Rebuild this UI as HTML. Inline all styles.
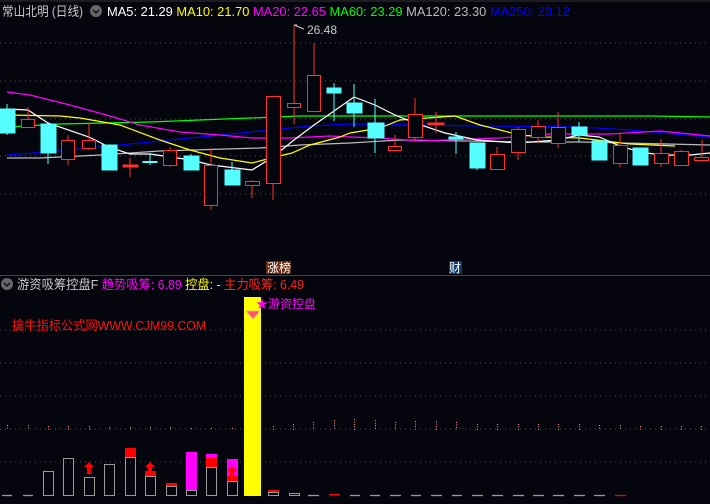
<!DOCTYPE html><html><head><meta charset="utf-8"><style>
body{margin:0;background:#05050d;width:710px;height:499px;overflow:hidden;font-family:"Liberation Sans","Noto Sans CJK SC",sans-serif}
svg text{font-family:"Liberation Sans","Noto Sans CJK SC",sans-serif}
</style></head><body>
<svg width="710" height="499" xmlns="http://www.w3.org/2000/svg">
<rect width="710" height="499" fill="#05050d"/>
<line x1="0" y1="1" x2="710" y2="1" fill="none" stroke="#333" />
<g stroke="#555" stroke-dasharray="1,4">
<line x1="0" y1="43" x2="710" y2="43"/><line x1="0" y1="81" x2="710" y2="81"/><line x1="0" y1="119" x2="710" y2="119"/><line x1="0" y1="156" x2="710" y2="156"/><line x1="0" y1="194" x2="710" y2="194"/>
<line x1="0" y1="330" x2="710" y2="330"/><line x1="0" y1="363" x2="710" y2="363"/><line x1="0" y1="396" x2="710" y2="396"/><line x1="0" y1="429" x2="710" y2="429"/><line x1="0" y1="462" x2="710" y2="462"/>
</g>
<text x="2" y="16" font-size="13" fill="#c8c8c8" textLength="81" lengthAdjust="spacingAndGlyphs">常山北明 (日线)</text>
<circle cx="96" cy="11" r="6" fill="#666"/><path d="M93 10l3 3 3-3" stroke="#111" stroke-width="1.5" fill="none"/>
<text x="107" y="16" font-size="13" textLength="463" lengthAdjust="spacingAndGlyphs"><tspan fill="#fff">MA5: 21.29 </tspan><tspan fill="#ffff00">MA10: 21.70 </tspan><tspan fill="#ff00ff">MA20: 22.65 </tspan><tspan fill="#00ff00">MA60: 23.29 </tspan><tspan fill="#bbb">MA120: 23.30 </tspan><tspan fill="#0000ff">MA250: 23.12</tspan></text>
<text x="307" y="34" font-size="12" fill="#ccc">26.48</text>
<path d="M294 25l3 0M294 25l10 4" stroke="#ccc" fill="none"/>
<g fill="none" stroke-width="1.2">
<polyline stroke="#00ff00" points="7,127 60,124 150,122 250,118 300,116 350,116 500,116 650,116 710,117"/>
<polyline stroke="#0000ff" points="7,155 60,151 150,142 220,135 270,130 310,126 350,124 420,125 480,126 580,127 630,130 710,137"/>
<polyline stroke="#bbbbbb" points="7,158 40,158 100,155 160,151 260,148 300,145 350,143 400,140 530,142 580,142 710,145"/>
<polyline stroke="#ff00ff" points="7,92 30,95 70,105 110,116 140,125 180,132 220,135 252,138 290,138 330,136 350,137 380,138 420,141 500,138 550,134 610,134 660,131 710,136"/>
<polyline stroke="#ffff00" points="7,115 60,116 80,118 120,125 160,140 190,150 220,158 252,163 275,157 292,153 310,145 340,137 350,133 380,128 400,120 455,116 480,125 520,135 545,137 580,138 630,144 675,146"/>
<polyline stroke="#ffffff" points="7,109 28,110 48,123 89,137 109,147 130,154 150,154 191,160 211,165 252,170 273,157 294,140 314,125 354,97 375,105 395,115 415,123 445,133 477,140 518,143 558,140 579,135 599,137 620,146 640,152 661,155 690,155 710,153"/>
</g>
<g stroke="#ff3030" fill="#05050d" stroke-width="1">
<line x1="28" y1="107" x2="28" y2="128"/><rect x="21.5" y="119.5" width="13" height="8"/>
<line x1="68" y1="135" x2="68" y2="165"/><rect x="61.5" y="140.5" width="13" height="19"/>
<line x1="89" y1="123" x2="89" y2="150"/><rect x="82.5" y="140.5" width="13" height="8"/>
<line x1="130" y1="158" x2="130" y2="177"/><rect x="123" y="165" width="15" height="2" fill="#ff3030"/>
<line x1="170" y1="147" x2="170" y2="167"/><rect x="163.5" y="150.5" width="13" height="15"/>
<line x1="211" y1="148" x2="211" y2="210"/><rect x="204.5" y="165.5" width="13" height="40"/>
<line x1="252" y1="180" x2="252" y2="198"/><rect x="245.5" y="181.5" width="14" height="4"/>
<line x1="273" y1="183" x2="273" y2="200"/><rect x="266.5" y="96.5" width="14" height="87"/>
<line x1="294" y1="25" x2="294" y2="124"/><rect x="287.5" y="103.5" width="13" height="4"/>
<line x1="314" y1="43" x2="314" y2="111"/><rect x="307.5" y="75.5" width="13" height="36"/>
<line x1="395" y1="135" x2="395" y2="151"/><rect x="388.5" y="146.5" width="13" height="4"/>
<line x1="415" y1="98" x2="415" y2="142"/><rect x="408.5" y="114.5" width="14" height="23"/>
<line x1="436" y1="112" x2="436" y2="133"/><rect x="428" y="123" width="16" height="1.5" fill="#ff3030"/>
<line x1="497" y1="147" x2="497" y2="169"/><rect x="490.5" y="154.5" width="14" height="15"/>
<line x1="518" y1="127" x2="518" y2="160"/><rect x="511.5" y="129.5" width="14" height="23"/>
<line x1="538" y1="120" x2="538" y2="143"/><rect x="531.5" y="126.5" width="14" height="11"/>
<line x1="558" y1="112" x2="558" y2="148"/><rect x="551.5" y="127.5" width="14" height="16"/>
<line x1="620" y1="134" x2="620" y2="167"/><rect x="613.5" y="145.5" width="14" height="18"/>
<line x1="661" y1="139" x2="661" y2="167"/><rect x="654.5" y="153.5" width="14" height="10"/>
<line x1="681" y1="150" x2="681" y2="166"/><rect x="674.5" y="151.5" width="14" height="14"/>
<line x1="702" y1="140" x2="702" y2="162"/><rect x="694.5" y="157.5" width="14" height="3"/>
</g>
<g stroke="#55ffff" fill="#55ffff">
<line x1="7" y1="104" x2="7" y2="135"/><rect x="0" y="109" width="15" height="24"/>
<line x1="48" y1="124" x2="48" y2="164"/><rect x="41" y="124" width="15" height="29"/>
<rect x="102" y="145" width="15" height="25"/>
<line x1="150" y1="153" x2="150" y2="165"/><rect x="143" y="161.5" width="14" height="1"/>
<line x1="191" y1="154" x2="191" y2="170"/><rect x="184" y="156" width="15" height="14"/>
<line x1="232" y1="162" x2="232" y2="185"/><rect x="225" y="170" width="15" height="15"/>
<line x1="334" y1="83" x2="334" y2="121"/><rect x="327" y="88" width="14" height="5"/>
<line x1="354" y1="84" x2="354" y2="127"/><rect x="347" y="103" width="15" height="10"/>
<line x1="375" y1="99" x2="375" y2="153"/><rect x="368" y="123" width="16" height="15"/>
<line x1="456" y1="132" x2="456" y2="154"/><rect x="449" y="137" width="14" height="2"/>
<line x1="477" y1="143" x2="477" y2="170"/><rect x="470" y="143" width="15" height="25"/>
<line x1="579" y1="122" x2="579" y2="142"/><rect x="572" y="127" width="15" height="8"/>
<rect x="592" y="141" width="15" height="19"/>
<rect x="633" y="148" width="15" height="17"/>
</g>
<rect x="266" y="261" width="25" height="13" fill="#6a2a10"/><text x="267" y="272" font-size="12" fill="#fff">涨榜</text>
<rect x="449" y="261" width="13" height="13" fill="#0a3a6a"/><text x="449" y="272" font-size="12" fill="#fff">财</text>
<line x1="0" y1="275.5" x2="710" y2="275.5" stroke="#444"/>
<circle cx="7" cy="284" r="6" fill="#666"/><path d="M4 283l3 3 3-3" stroke="#111" stroke-width="1.5" fill="none"/>
<text x="17" y="289" font-size="13" textLength="287" lengthAdjust="spacingAndGlyphs"><tspan fill="#c8c8c8">游资吸筹控盘F </tspan><tspan fill="#ff00ff">趋势吸筹: 6.89 </tspan><tspan fill="#ffff00">控盘: - </tspan><tspan fill="#ff2020">主力吸筹: 6.49</tspan></text>
<text x="12" y="330" font-size="13" fill="#ff1010" textLength="194" lengthAdjust="spacingAndGlyphs">擒牛指标公式网WWW.CJM99.COM</text>
<rect x="244" y="297" width="17" height="199" fill="#ffff00"/>
<path d="M246 311h14l-7 8z" fill="#ff5566" stroke="#ffaaaa" stroke-width="0.8"/>
<text x="256" y="308" font-size="12" fill="#ff00ff">★游资控盘</text>
<g stroke="#ff9090" stroke-dasharray="1,1.5" stroke-width="1">
<line x1="7.5" y1="425" x2="7.5" y2="430"/><line x1="28.5" y1="425" x2="28.5" y2="430"/><line x1="48.5" y1="426" x2="48.5" y2="430"/><line x1="68.5" y1="426" x2="68.5" y2="430"/><line x1="89.5" y1="426" x2="89.5" y2="430"/><line x1="109.5" y1="427" x2="109.5" y2="430"/><line x1="130.5" y1="427" x2="130.5" y2="430"/><line x1="150.5" y1="427" x2="150.5" y2="430"/><line x1="170.5" y1="427" x2="170.5" y2="430"/><line x1="191.5" y1="428" x2="191.5" y2="430"/><line x1="211.5" y1="428" x2="211.5" y2="430"/><line x1="232.5" y1="428" x2="232.5" y2="430"/><line x1="273.5" y1="426" x2="273.5" y2="430"/><line x1="293.5" y1="424" x2="293.5" y2="430"/><line x1="313.5" y1="422" x2="313.5" y2="430"/><line x1="334.5" y1="420" x2="334.5" y2="430"/><line x1="354.5" y1="419" x2="354.5" y2="430"/><line x1="375.5" y1="420" x2="375.5" y2="430"/><line x1="395.5" y1="422" x2="395.5" y2="430"/><line x1="415.5" y1="421" x2="415.5" y2="430"/><line x1="436.5" y1="421" x2="436.5" y2="430"/><line x1="456.5" y1="422" x2="456.5" y2="430"/><line x1="477.5" y1="424" x2="477.5" y2="430"/><line x1="497.5" y1="424" x2="497.5" y2="430"/><line x1="518.5" y1="424" x2="518.5" y2="430"/><line x1="538.5" y1="424" x2="538.5" y2="430"/><line x1="558.5" y1="424" x2="558.5" y2="430"/><line x1="579.5" y1="424" x2="579.5" y2="430"/><line x1="599.5" y1="425" x2="599.5" y2="430"/><line x1="620.5" y1="425" x2="620.5" y2="430"/><line x1="640.5" y1="426" x2="640.5" y2="430"/><line x1="661.5" y1="426" x2="661.5" y2="430"/><line x1="681.5" y1="426" x2="681.5" y2="430"/><line x1="701.5" y1="426" x2="701.5" y2="430"/>
</g>
<g fill="#ff0000">
<rect x="125" y="448" width="11" height="9"/><rect x="145" y="471" width="11" height="5"/><rect x="166" y="483" width="11" height="3"/><rect x="206" y="458" width="11" height="9"/><rect x="227" y="476" width="11" height="5"/><rect x="268" y="490" width="11" height="2"/><rect x="329" y="494" width="11" height="1.5"/>
<path d="M89 462l-5 5h3v7h4v-7h3z"/><path d="M150 462l-5 5h3v7h4v-7h3z"/>
</g>
<g fill="#ff00ff"><rect x="186" y="452" width="11" height="38"/><rect x="206" y="454" width="11" height="4"/><rect x="227" y="459" width="11" height="17"/></g>
<path d="M232 466l-5 5h3v7h4v-7h3z" fill="#ff0000"/>
<g fill="none" stroke="#999" stroke-width="1">
<rect x="43.5" y="471.5" width="10" height="24"/><rect x="63.5" y="458.5" width="10" height="37"/><rect x="84.5" y="477.5" width="10" height="18"/><rect x="104.5" y="464.5" width="10" height="31"/><rect x="125.5" y="457.5" width="10" height="38"/><rect x="145.5" y="476.5" width="10" height="19"/><rect x="166.5" y="486.5" width="10" height="9"/><rect x="186.5" y="490.5" width="10" height="5"/><rect x="206.5" y="467.5" width="10" height="28"/><rect x="227.5" y="481.5" width="10" height="14"/><rect x="268.5" y="492.5" width="10" height="3"/><rect x="289.5" y="493.5" width="10" height="2"/>
</g>
<g stroke="#999" stroke-width="1.3">
<line x1="2" y1="495.5" x2="12" y2="495.5"/><line x1="23" y1="495.5" x2="33" y2="495.5"/><line x1="308" y1="495.5" x2="319" y2="495.5"/>
<line x1="350" y1="495.5" x2="360" y2="495.5"/><line x1="370" y1="495.5" x2="380" y2="495.5"/><line x1="390" y1="495.5" x2="401" y2="495.5"/><line x1="411" y1="495.5" x2="421" y2="495.5"/><line x1="431" y1="495.5" x2="442" y2="495.5"/><line x1="452" y1="495.5" x2="462" y2="495.5"/><line x1="472" y1="495.5" x2="483" y2="495.5"/><line x1="492" y1="495.5" x2="503" y2="495.5"/><line x1="513" y1="495.5" x2="524" y2="495.5"/><line x1="533" y1="495.5" x2="544" y2="495.5"/><line x1="553" y1="495.5" x2="564" y2="495.5"/><line x1="574" y1="495.5" x2="585" y2="495.5"/><line x1="594" y1="495.5" x2="605" y2="495.5"/>
</g>
<line x1="615" y1="495.5" x2="626" y2="495.5" stroke="#e00" stroke-width="1.3"/>
</svg>
</body></html>
